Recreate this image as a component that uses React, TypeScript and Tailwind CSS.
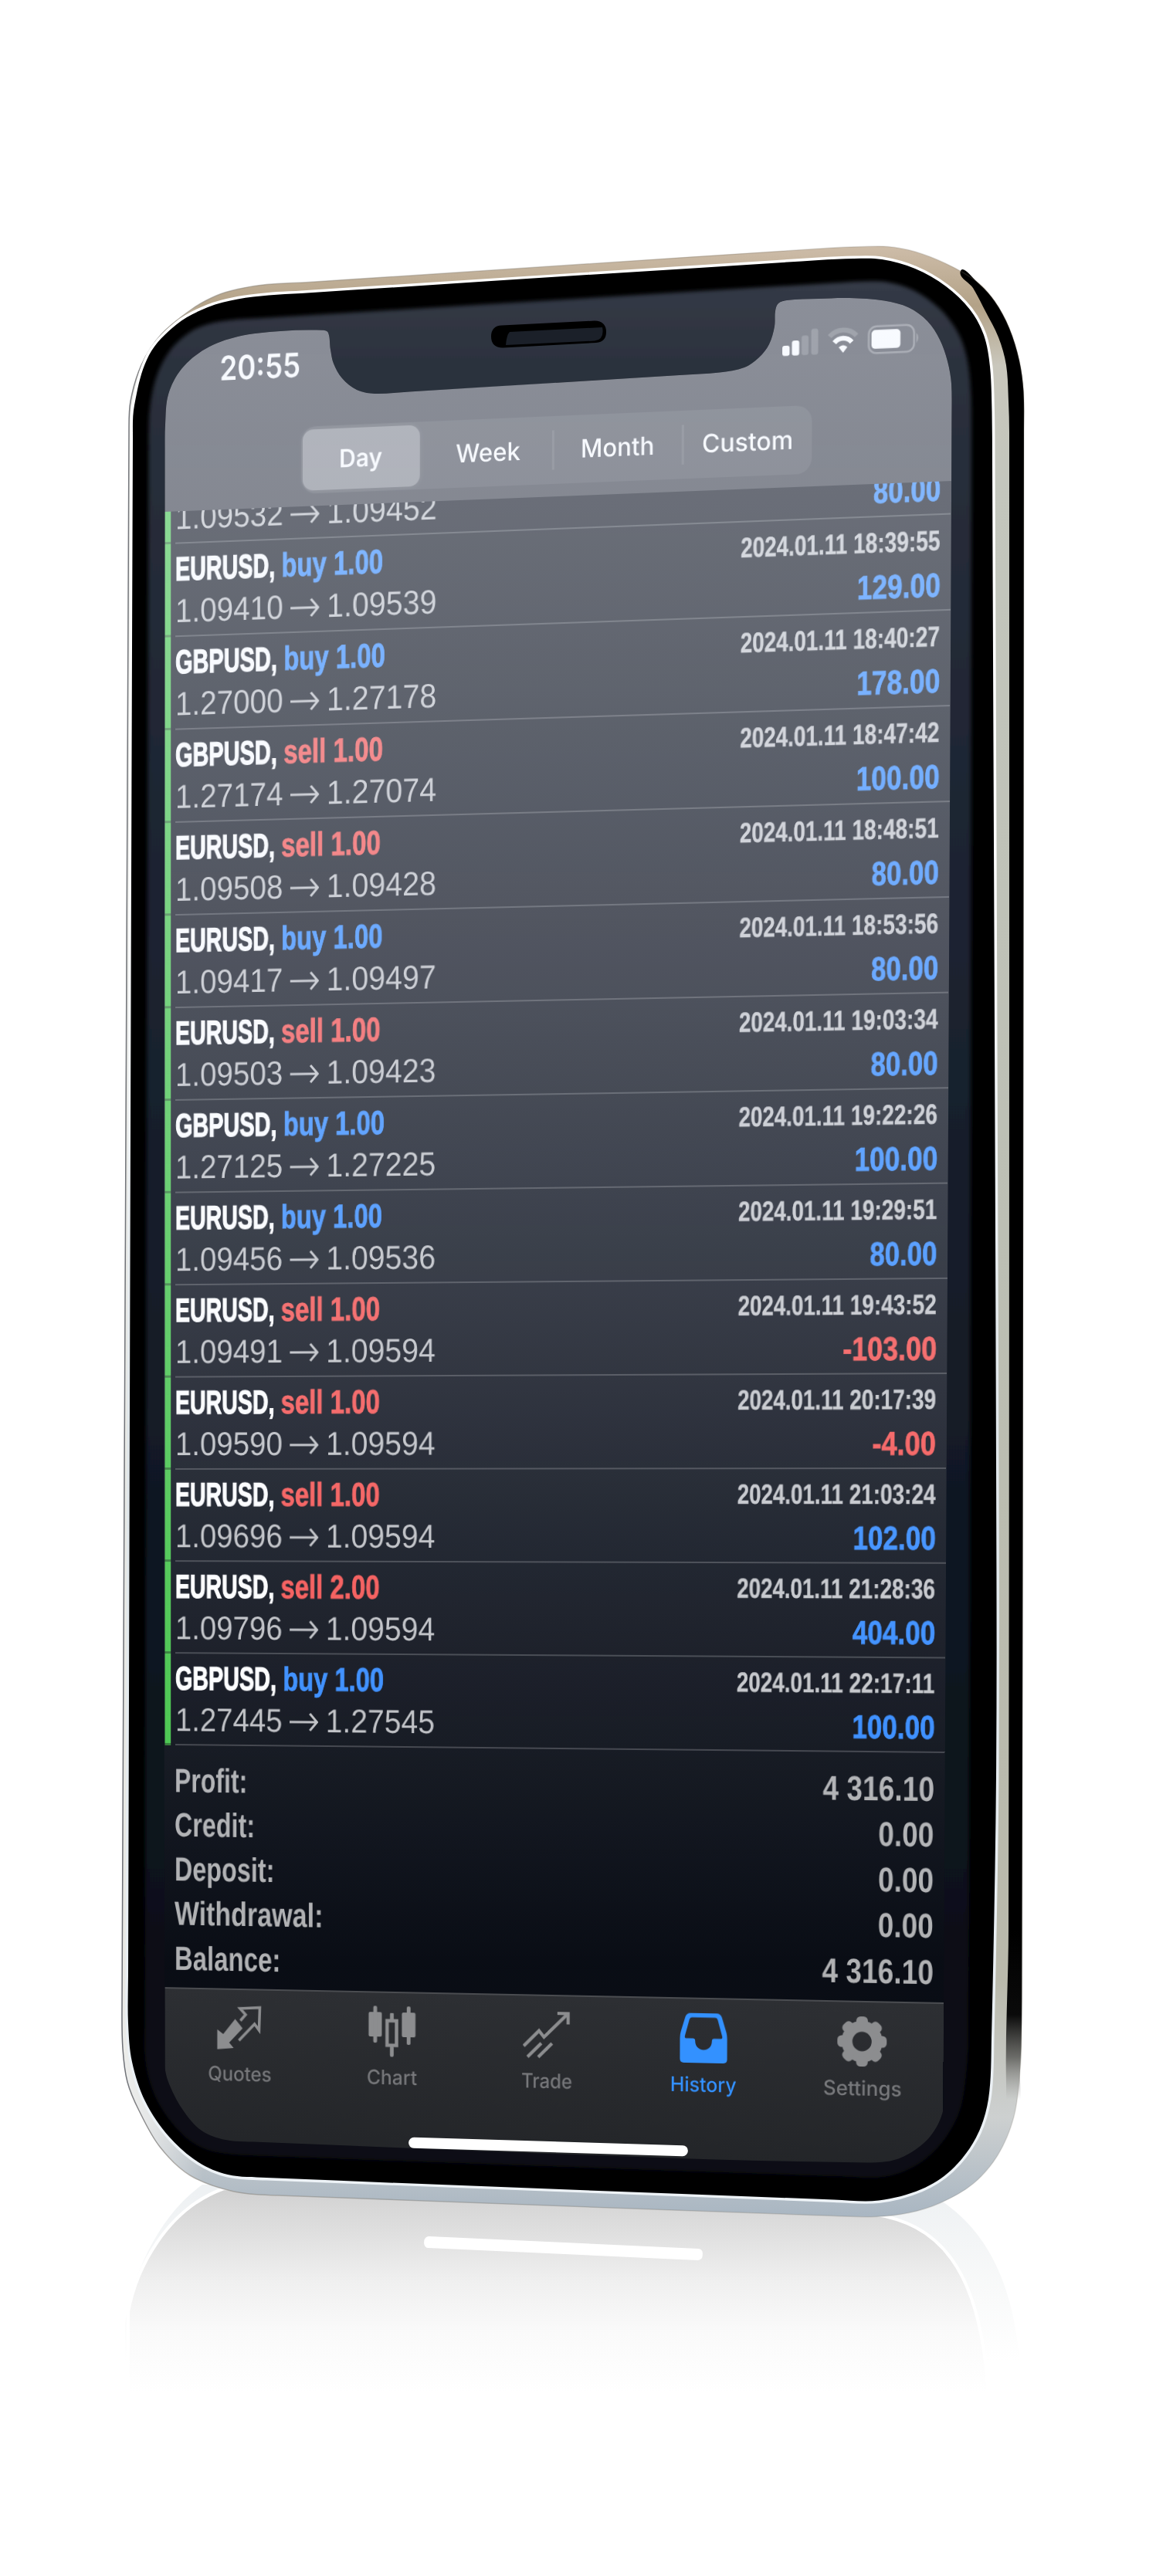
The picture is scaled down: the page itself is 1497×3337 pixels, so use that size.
import { useLayoutEffect, useRef } from "react";
import type { ReactNode } from "react";

type Pt = [number, number];

/* Smooth closed outline through a list of points. */
function outline(points: Pt[]): string {
  const n = points.length;
  const dir = (i: number): Pt => {
    const a = points[(i - 1 + n) % n];
    const b = points[(i + 1) % n];
    const l = Math.hypot(b[0] - a[0], b[1] - a[1]) || 1;
    return [(b[0] - a[0]) / l, (b[1] - a[1]) / l];
  };
  let d = `M${points[0][0]} ${points[0][1]}`;
  for (let i = 0; i < n; i++) {
    const p = points[i];
    const q = points[(i + 1) % n];
    const len = Math.hypot(q[0] - p[0], q[1] - p[1]) / 3;
    const t = dir(i);
    const u = dir((i + 1) % n);
    d += ` C${(p[0] + t[0] * len).toFixed(1)} ${(p[1] + t[1] * len).toFixed(1)} ${(q[0] - u[0] * len).toFixed(1)} ${(q[1] - u[1] * len).toFixed(1)} ${q[0]} ${q[1]}`;
  }
  return d + "Z";
}

/* Perspective matrix that maps a w x h rectangle to four corners. */
function perspective(w: number, h: number, [p0, p1, p2, p3]: Pt[]): string {
  const dx1 = p1[0] - p2[0], dy1 = p1[1] - p2[1];
  const dx2 = p3[0] - p2[0], dy2 = p3[1] - p2[1];
  const sx = p0[0] - p1[0] + p2[0] - p3[0];
  const sy = p0[1] - p1[1] + p2[1] - p3[1];
  const den = dx1 * dy2 - dx2 * dy1;
  const g = (sx * dy2 - dx2 * sy) / den;
  const k = (dx1 * sy - sx * dy1) / den;
  const a = (p1[0] - p0[0] + g * p1[0]) / w;
  const d = (p1[1] - p0[1] + g * p1[1]) / w;
  const b = (p3[0] - p0[0] + k * p3[0]) / h;
  const e = (p3[1] - p0[1] + k * p3[1]) / h;
  return `matrix3d(${a},${d},0,${g / w},${b},${e},0,${k / h},0,0,1,0,${p0[0]},${p0[1]},0,1)`;
}

const OUTER = outline([
  [167, 560], [169, 520], [183, 473], [209, 433], [249, 400], [280, 383], [308, 374.5], [345, 368.5], [400, 365.5],
  [1070, 321.5], [1118, 319.5], [1150, 319.5], [1185, 326], [1224, 341], [1264, 364], [1288, 390], [1307, 425], [1320, 467], [1325.5, 507], [1326, 560],
  [1323, 2640], [1321, 2682], [1313, 2742], [1292, 2792], [1260, 2829], [1217, 2854], [1177, 2866.5], [1134, 2871.5], [1080, 2870.5],
  [360, 2844], [303, 2839], [246, 2818], [207, 2781], [180, 2734], [165, 2697], [159, 2654], [158, 2600],
]);

const GLASS_EDGE = outline([
  [172, 570], [174, 525], [193, 460], [229, 420], [269, 398], [308, 387.5], [348, 382.5], [390, 380],
  [1060, 337], [1106, 335], [1142, 336], [1185, 348], [1225, 371], [1256, 401], [1274, 434], [1282, 475], [1284.5, 533], [1285, 600],
  [1290, 1900], [1290, 2300], [1284, 2640], [1280, 2719], [1264, 2769], [1232, 2811], [1193, 2836], [1138, 2850.5], [1080, 2849.5],
  [345, 2821], [295, 2817], [257, 2801], [219, 2768], [188, 2722], [171, 2671], [166, 2621], [166, 2560],
]);

const GLASS = outline([
  [192.5, 580], [194, 530], [203, 487], [221, 453], [245, 431], [269, 420], [300, 414.5], [340, 412],
  [1080, 366.5], [1118, 364.5], [1149, 365.5], [1183, 376], [1217, 400], [1240, 430], [1252, 463], [1257, 505], [1258, 570],
  [1254, 2640], [1249, 2705], [1240, 2742], [1217, 2779], [1185, 2806], [1145, 2820], [1090, 2819.5],
  [340, 2793], [292, 2790], [261, 2782], [234, 2763], [204, 2722], [189, 2675], [187.5, 2620],
]);

const SCREEN = outline([
  [213.5, 580], [214, 550], [218, 511], [235, 478], [266, 452], [308, 436], [363, 429], [418, 427.8], [425, 431],
  [428, 453], [432, 471], [443, 490], [462, 505], [485, 510], [530, 507.5],
  [880, 486], [932, 482.5], [964, 476], [983, 463], [996, 446], [1003, 423], [1004, 403], [1008, 393], [1019, 389],
  [1060, 387], [1100, 386], [1145, 389.5], [1177, 398.5], [1201, 416], [1217, 440], [1227, 468], [1232, 497], [1232.5, 540],
  [1221.7, 2690], [1221.5, 2733], [1205, 2767], [1177, 2790], [1149, 2800], [1094, 2801],
  [880, 2796], [340, 2775], [292, 2772], [261, 2760], [238, 2735], [220, 2702], [213.5, 2675],
]);

const EDGE_SHADE = outline([
  [1244, 351], [1264, 364], [1288, 390], [1307, 425], [1320, 467], [1325.5, 507], [1326, 560],
  [1323.5, 2560], [1321, 2682], [1312, 2745], [1303, 2700], [1306, 2500],
  [1307, 560], [1306, 520], [1303, 473], [1293, 437], [1276, 403], [1260, 373],
]);

const TILT = perspective(1018, 1560, [[213.5, 705.2], [1231.5, 666.6], [1223.5, 2271], [213.5, 2260.8]]);

/* Text condensed or expanded to an exact width. */
function Fit({ w, children, className = "" }: { w: number; children: ReactNode; className?: string }) {
  const ref = useRef<HTMLSpanElement>(null);
  useLayoutEffect(() => {
    const el = ref.current;
    if (el) el.style.transform = `scaleX(${w / el.offsetWidth})`;
  }, [w]);
  return (
    <span className={`block shrink-0 ${className}`} style={{ width: w }}>
      <span ref={ref} className="inline-block origin-left whitespace-nowrap">{children}</span>
    </span>
  );
}

type Deal = { pair: string; side: "buy" | "sell"; lots: string; from: string; to: string; time: string; profit: string };

const DEALS: Deal[] = [
  { pair: "EURUSD", side: "sell", lots: "1.00", from: "1.09532", to: "1.09452", time: "", profit: "80.00" },
  { pair: "EURUSD", side: "buy", lots: "1.00", from: "1.09410", to: "1.09539", time: "2024.01.11 18:39:55", profit: "129.00" },
  { pair: "GBPUSD", side: "buy", lots: "1.00", from: "1.27000", to: "1.27178", time: "2024.01.11 18:40:27", profit: "178.00" },
  { pair: "GBPUSD", side: "sell", lots: "1.00", from: "1.27174", to: "1.27074", time: "2024.01.11 18:47:42", profit: "100.00" },
  { pair: "EURUSD", side: "sell", lots: "1.00", from: "1.09508", to: "1.09428", time: "2024.01.11 18:48:51", profit: "80.00" },
  { pair: "EURUSD", side: "buy", lots: "1.00", from: "1.09417", to: "1.09497", time: "2024.01.11 18:53:56", profit: "80.00" },
  { pair: "EURUSD", side: "sell", lots: "1.00", from: "1.09503", to: "1.09423", time: "2024.01.11 19:03:34", profit: "80.00" },
  { pair: "GBPUSD", side: "buy", lots: "1.00", from: "1.27125", to: "1.27225", time: "2024.01.11 19:22:26", profit: "100.00" },
  { pair: "EURUSD", side: "buy", lots: "1.00", from: "1.09456", to: "1.09536", time: "2024.01.11 19:29:51", profit: "80.00" },
  { pair: "EURUSD", side: "sell", lots: "1.00", from: "1.09491", to: "1.09594", time: "2024.01.11 19:43:52", profit: "-103.00" },
  { pair: "EURUSD", side: "sell", lots: "1.00", from: "1.09590", to: "1.09594", time: "2024.01.11 20:17:39", profit: "-4.00" },
  { pair: "EURUSD", side: "sell", lots: "1.00", from: "1.09696", to: "1.09594", time: "2024.01.11 21:03:24", profit: "102.00" },
  { pair: "EURUSD", side: "sell", lots: "2.00", from: "1.09796", to: "1.09594", time: "2024.01.11 21:28:36", profit: "404.00" },
  { pair: "GBPUSD", side: "buy", lots: "1.00", from: "1.27445", to: "1.27545", time: "2024.01.11 22:17:11", profit: "100.00" },
];

const PROFIT_W: Record<string, number> = { "80.00": 85, "-103.00": 119, "-4.00": 81 };

const TOTALS = [
  { label: "Profit:", lw: 98, value: "4 316.10", vw: 142 },
  { label: "Credit:", lw: 108, value: "0.00", vw: 71 },
  { label: "Deposit:", lw: 134, value: "0.00", vw: 71 },
  { label: "Withdrawal:", lw: 199, value: "0.00", vw: 71 },
  { label: "Balance:", lw: 142, value: "4 316.10", vw: 142 },
];

function DealRow({ deal, first }: { deal: Deal; first: boolean }) {
  const sell = deal.side === "sell";
  return (
    <div className="flex h-[120px] shrink-0">
      <div className="w-[8px] border-b-[3px] border-[#2c7a30] bg-[#43c547]" />
      <div className="ml-[6px] flex grow justify-between border-b-[2.5px] border-[#3b3e45] pr-[13px]">
        <div className={first ? "pt-[58.6px]" : "pt-[4.6px]"}>
          {!first && (
            <div className="flex gap-[8px] text-[43px] leading-[54px] font-bold">
              <Fit w={deal.pair === "EURUSD" ? 133 : 135.5} className="text-white [-webkit-text-stroke:1.4px]">{deal.pair},</Fit>
              <Fit w={sell ? 131 : 134} className={`[-webkit-text-stroke:0.9px] ${sell ? "text-[#f8524f]" : "text-[#338aff]"}`}>{deal.side} {deal.lots}</Fit>
            </div>
          )}
          <div className="flex items-center text-[43px] leading-[54px] text-[#bfc0c3]">
            <Fit w={143}>{deal.from}</Fit>
            <svg viewBox="0 0 38 30" className="mr-[10px] ml-[10px] h-[30px] w-[38px]" fill="none" stroke="currentColor" strokeWidth="3">
              <path d="M0 17H36M27 6L36.5 17L27 28" />
            </svg>
            <Fit w={144}>{deal.to}</Fit>
          </div>
        </div>
        <div className={`flex flex-col items-end font-bold ${first ? "pt-[52px]" : "pt-[12px]"}`}>
          {!first && <Fit w={253} className="text-[35.5px] leading-[40px] text-[#c4c5c8] [-webkit-text-stroke:0.4px]">{deal.time}</Fit>}
          <Fit w={PROFIT_W[deal.profit] ?? 105} className={`mt-[4.5px] text-[42px] leading-[62px] [-webkit-text-stroke:0.8px] ${deal.profit.startsWith("-") ? "text-[#f8524f]" : "text-[#338aff]"}`}>
            {deal.profit}
          </Fit>
        </div>
      </div>
    </div>
  );
}

function StatusBar() {
  return (
    <div className="flex h-[94px] items-center justify-between pt-[17px] pr-[40px] pl-[73px]">
      <Fit w={107} className="font-[Inter] text-[43px] leading-[50px] font-semibold text-white">20:55</Fit>
      <div className="flex items-end gap-[12px]">
        <svg viewBox="0 0 47 33" className="h-[33px] w-[46px]" fill="#fff">
          <rect x="0" y="20" width="9.5" height="13" rx="3" />
          <rect x="12.5" y="14" width="9.5" height="19" rx="3" />
          <rect x="25" y="8" width="9" height="25" rx="3" opacity=".2" />
          <rect x="37.5" y="0" width="9" height="33" rx="3" opacity=".2" />
        </svg>
        <svg viewBox="0 0 38 33" className="h-[33px] w-[38px]" fill="none" stroke="#fff" strokeWidth="6">
          <path d="M2 11C11 1 27 1 36 11" opacity=".2" />
          <path d="M8 19C14 12 24 12 30 19" />
          <path d="M13.500 25Q19 20 24.500 25L19 32Z" fill="#fff" stroke="none" />
        </svg>
        <svg viewBox="0 0 67 37" className="-mb-[3px] h-[37px] w-[66px]">
          <rect x="1.5" y="1.5" width="58" height="34" rx="10" fill="none" stroke="#fff" strokeWidth="2.5" opacity=".3" />
          <rect x="5" y="6" width="37" height="24" rx="5" fill="#fff" />
          <path d="M62.500 12Q67 18 62.500 25Z" fill="#fff" opacity=".3" />
        </svg>
      </div>
    </div>
  );
}

function Segments() {
  return (
    <div className="mt-[42px] ml-[181px] flex h-[86px] w-[661px] items-center rounded-[20px] bg-white/8 font-[Inter] text-[32px] leading-none font-medium text-white">
      <div className="ml-[1.5px] flex h-[78px] w-[154.5px] items-center justify-center rounded-[14px] bg-white/32 shadow-[0_0_6px_rgba(255,255,255,0.12)]">
        <Fit w={57} className="font-semibold">Day</Fit>
      </div>
      <div className="ml-[7px] flex w-[164.5px] justify-center"><Fit w={84}>Week</Fit></div>
      <div className="h-[50px] w-[3px] bg-white/10" />
      <div className="flex w-[164px] justify-center"><Fit w={95}>Month</Fit></div>
      <div className="h-[50px] w-[3px] bg-white/10" />
      <div className="flex grow justify-center"><Fit w={116}>Custom</Fit></div>
    </div>
  );
}

const QuotesIcon = () => (
  <svg viewBox="0 0 61 60" className="h-[60px] w-[62px]" fill="none">
    <path d="M1 32L9 38L25 18L35 30L17 49L23 56L1 58Z" fill="currentColor" />
    <path d="M32 20L39 12L31.500 4L58 2.500L57 32L51 24L30 46" stroke="currentColor" strokeWidth="3.6" />
  </svg>
);

const ChartIcon = () => (
  <svg viewBox="0 0 62 66" className="h-[66px] w-[63px]" fill="currentColor">
    <rect x="0" y="8" width="17.500" height="32" rx="2" />
    <rect x="6.200" y="0" width="5" height="48" rx="2" />
    <rect x="24.500" y="19" width="12.500" height="32" fill="none" stroke="currentColor" strokeWidth="4.500" />
    <rect x="28.300" y="9" width="5" height="9" rx="1" />
    <rect x="28.300" y="52" width="5" height="14" rx="2" />
    <rect x="44" y="8" width="18" height="32" rx="2" />
    <rect x="50.500" y="0" width="5" height="50" rx="2" />
  </svg>
);

const TradeIcon = () => (
  <svg viewBox="0 0 62 62" className="h-[62px] w-[62px]" fill="none" stroke="currentColor" strokeWidth="4.2">
    <path d="M1 46L21 26L27.500 34L58 4" />
    <path d="M45 3H59V17" />
    <path d="M6 60L24 42M20 60L38 42" />
  </svg>
);

const HistoryIcon = () => (
  <svg viewBox="0 0 62 65" className="h-[64px] w-[62px]" fill="currentColor" fillRule="evenodd">
    <path d="M14 0H48Q53 0 55 5L61 25Q62 29 62 33V60Q62 65 57 65H5Q0 65 0 60V33Q0 29 1 25L7 5Q9 0 14 0ZM16 5.500Q13.500 5.500 12.500 8L6.500 30Q6 33 8 33H17Q20 33 20 36C20 52 42 52 42 36Q42 33 45 33H54Q56 33 55.500 30L49.500 8Q48.500 5.500 46 5.500Z" />
  </svg>
);

const GearIcon = () => (
  <svg viewBox="-32 -34 64 68" preserveAspectRatio="none" className="h-[68px] w-[63px]">
    <circle r="19.500" fill="none" stroke="currentColor" strokeWidth="14" />
    {[0, 45, 90, 135, 180, 225, 270, 315].map((a) => (
      <rect key={a} x="-7.500" y="-32" width="15" height="13" rx="5.500" fill="currentColor" transform={`rotate(${a})`} />
    ))}
  </svg>
);

const TABS = [
  { label: "Quotes", w: 85, icon: <QuotesIcon />, on: false },
  { label: "Chart", w: 67, icon: <ChartIcon />, on: false },
  { label: "Trade", w: 67, icon: <TradeIcon />, on: false },
  { label: "History", w: 86, icon: <HistoryIcon />, on: true },
  { label: "Settings", w: 100, icon: <GearIcon />, on: false },
];

function TabBar() {
  return (
    <div className="flex h-[240px] border-t-2 border-[#4a4c50] bg-linear-to-b from-[#2d2f33] to-[#222427]">
      <div className="-ml-[1.5px] flex pt-[15px]">
        {TABS.map((t) => (
          <div key={t.label} className={`flex w-[203.6px] flex-col items-center ${t.on ? "text-[#3391ff]" : "text-[#8c8d8f]"}`}>
            <div className="flex h-[70px] items-center">{t.icon}</div>
            <Fit w={t.w} className={`mt-[9px] font-[Inter] text-[26px] leading-[32px] font-medium ${t.on ? "" : "text-[#77787b]"}`}>{t.label}</Fit>
          </div>
        ))}
      </div>
    </div>
  );
}

function PhoneBody() {
  return (
    <svg viewBox="0 0 1497 3337" className="absolute inset-0 h-[3337px] w-[1497px]" fill="none">
      <defs>
        <linearGradient id="frame" gradientUnits="userSpaceOnUse" x1="0" y1="320" x2="0" y2="2870">
          <stop offset="0" stopColor="#cdbca8" />
          <stop offset=".03" stopColor="#b3a287" />
          <stop offset=".06" stopColor="#c9c7bc" />
          <stop offset=".12" stopColor="#c3c6bd" />
          <stop offset=".5" stopColor="#bcbfb4" />
          <stop offset=".88" stopColor="#b9b9ab" />
          <stop offset=".95" stopColor="#cdd0d0" />
          <stop offset="1" stopColor="#a9b6c2" />
        </linearGradient>
        <linearGradient id="leftShine" x1="0" x2="1" y1="0" y2="0">
          <stop offset="0" stopColor="#fff" />
          <stop offset=".02" stopColor="#fff" stopOpacity=".8" />
          <stop offset=".09" stopColor="#fff" stopOpacity="0" />
        </linearGradient>
        <linearGradient id="hair" x1="0" x2="1" y1="0" y2="0">
          <stop offset="0" stopColor="#6b6e75" />
          <stop offset=".06" stopColor="#8f8a82" stopOpacity=".6" />
          <stop offset=".2" stopColor="#7d776c" stopOpacity=".4" />
          <stop offset="1" stopColor="#7d776c" stopOpacity=".2" />
        </linearGradient>
        <linearGradient id="rim" gradientUnits="userSpaceOnUse" x1="0" y1="320" x2="0" y2="2870">
          <stop offset="0" stopColor="#fff" />
          <stop offset=".3" stopColor="#fff" />
          <stop offset=".6" stopColor="#dfe6ea" />
          <stop offset="1" stopColor="#eef3f7" />
        </linearGradient>
        <linearGradient id="edge" gradientUnits="userSpaceOnUse" x1="0" y1="2500" x2="0" y2="2720">
          <stop offset="0" stopColor="#000" />
          <stop offset=".5" stopColor="#0a0a0a" />
          <stop offset=".75" stopColor="#555552" stopOpacity=".8" />
          <stop offset="1" stopColor="#888" stopOpacity="0" />
        </linearGradient>
        <linearGradient id="glass" gradientUnits="userSpaceOnUse" x1="0" y1="370" x2="0" y2="2820">
          <stop offset="0" stopColor="#343a46" />
          <stop offset=".05" stopColor="#2a303c" />
          <stop offset=".25" stopColor="#1f2634" />
          <stop offset=".6" stopColor="#121a26" />
          <stop offset="1" stopColor="#090c13" />
        </linearGradient>
        <linearGradient id="mirror" gradientUnits="userSpaceOnUse" x1="0" y1="2840" x2="0" y2="3100">
          <stop offset="0" stopColor="#d2d2d2" />
          <stop offset=".2" stopColor="#dfdfdf" />
          <stop offset=".45" stopColor="#f0f0f0" />
          <stop offset=".7" stopColor="#fafafa" />
          <stop offset="1" stopColor="#fff" />
        </linearGradient>
        <linearGradient id="mirrorRim" gradientUnits="userSpaceOnUse" x1="0" y1="2840" x2="0" y2="3060">
          <stop offset="0" stopColor="#eef1f3" />
          <stop offset=".6" stopColor="#f9fafa" />
          <stop offset="1" stopColor="#fff" />
        </linearGradient>
        <filter id="soft" x="-10%" y="-10%" width="120%" height="120%"><feGaussianBlur stdDeviation="2.500" /></filter>
      </defs>

      <path d="M162 3100V3010C170 2950 205 2870 262 2830H1180C1270 2868 1320 2950 1322 3100Z" fill="url(#mirrorRim)" />
      <path d="M166 3110V2995C176 2940 215 2862 290 2835L1130 2868C1210 2880 1272 2930 1280 3110Z" fill="url(#mirror)" stroke="#fff" strokeWidth="4" />

      <path d={OUTER} fill="url(#frame)" />
      <path d={OUTER} fill="url(#leftShine)" opacity=".7" />
      <path d={EDGE_SHADE} fill="url(#edge)" />
      <path d={OUTER} stroke="url(#hair)" strokeWidth="1.500" />
      <path d={GLASS_EDGE} fill="#000" stroke="url(#rim)" strokeWidth="7" />
      <path d={GLASS_EDGE} fill="#000" />
      <path d={GLASS} fill="url(#glass)" filter="url(#soft)" />

      <path d="M650 421.500L770 415.500Q785 416 785 430Q785 443 772 444L651 450.500Q636 450 636 436Q636 422 650 421.500Z" fill="#000" />
      <path d="M660 430L780 424Q783 440 770 441.500L655 447Q656 434 660 430Z" fill="#1b2029" />
    </svg>
  );
}

export default function App() {
  return (
    <div className="relative h-[3337px] w-[1497px] overflow-hidden bg-white font-['Liberation_Sans',Arial,sans-serif]">
      <PhoneBody />
      <div className="absolute inset-0 bg-linear-to-b from-[#090c14] via-[#090d17] to-[#0a0d13]" style={{ clipPath: `path("${SCREEN}")` }}>
        <div className="flex h-[2400px] w-[1018px] origin-top-left flex-col" style={{ transform: `${TILT} translateY(-280px)` }}>
          <header className="h-[238px] shrink-0 bg-[#383a43] shadow-[0_-120px_0_#383a43]">
            <StatusBar />
            <Segments />
          </header>
          <main className="flex shrink-0 flex-col overflow-hidden">
            <div className="-mt-[78px] flex flex-col">
              {DEALS.map((d, i) => <DealRow key={i} deal={d} first={i === 0} />)}
            </div>
            <div className="flex h-[317px] flex-col pt-[16.500px] pr-[13px] pl-[13px] text-[44px] leading-[58.300px] font-bold text-[#b0b1b3]">
              {TOTALS.map((t) => (
                <div key={t.label} className="flex justify-between">
                  <Fit w={t.lw}>{t.label}</Fit>
                  <Fit w={t.vw}>{t.value}</Fit>
                </div>
              ))}
            </div>
          </main>
          <TabBar />
        </div>
        <div className="pointer-events-none absolute inset-0 bg-[linear-gradient(180deg,rgba(238,244,255,0.46)_385px,rgba(238,244,255,0.42)_680px,rgba(236,242,255,0.36)_1000px,rgba(234,240,255,0.30)_1300px,rgba(232,240,255,0.255)_1500px,rgba(230,238,255,0.18)_1800px,rgba(226,236,255,0.125)_2000px,rgba(226,236,255,0.07)_2250px,rgba(226,236,255,0)_2560px)]" />
      </div>
      <div className="absolute top-[2774px] left-[529px] h-[14px] w-[362px] rotate-[1.7deg] rounded-full bg-white" />
      <div className="absolute top-[2905px] left-[549px] h-[15px] w-[361px] rotate-[2.6deg] rounded-[6px] bg-white" />
    </div>
  );
}
